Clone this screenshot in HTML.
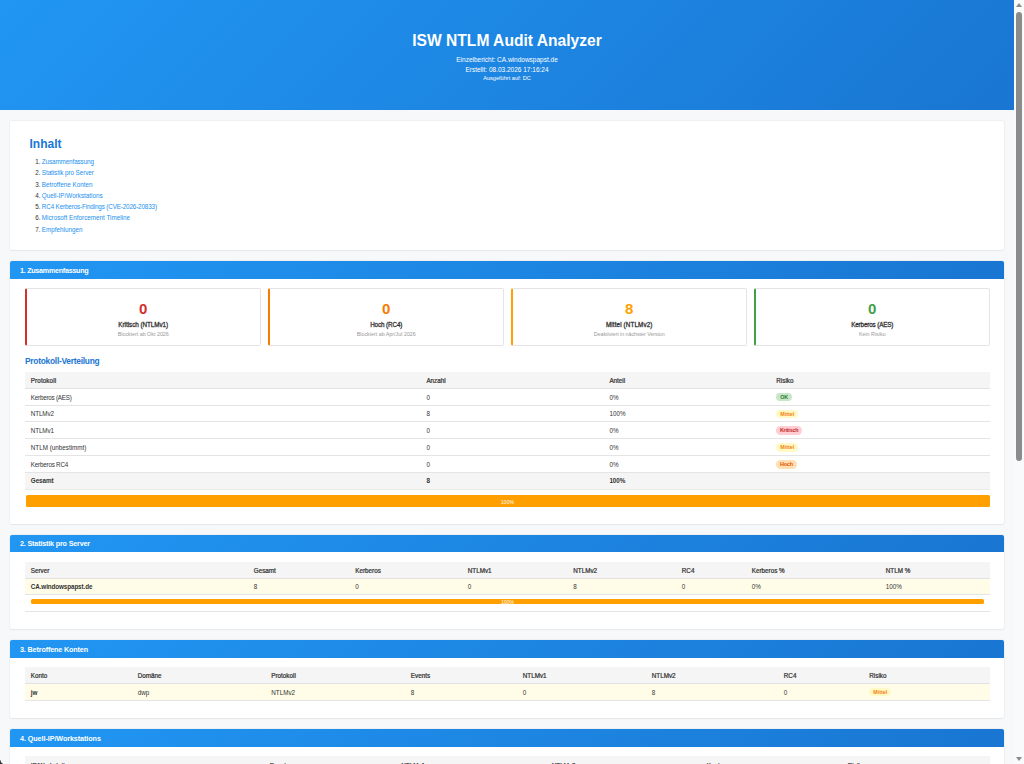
<!DOCTYPE html>
<html lang="de">
<head>
<meta charset="utf-8">
<title>ISW NTLM Audit Analyzer</title>
<style>
*{box-sizing:border-box;}
html,body{margin:0;padding:0;}
html{overflow:hidden;}
body{width:1024px;height:764px;overflow:hidden;position:relative;background:#f7f8fa;font-family:"Liberation Sans",sans-serif;color:#333;font-size:6.5px;line-height:1;}
#page{position:absolute;left:0;top:0;width:1014px;height:764px;overflow:hidden;}
.hdr{position:absolute;left:0;top:0;width:1014px;height:110px;background:linear-gradient(135deg,#2196f3 0%,#1976d2 100%);color:#fff;text-align:center;}
.hdr .t{position:absolute;left:0;width:1014px;white-space:nowrap;}
.hdr h1{margin:0;font-size:15.6px;font-weight:bold;top:33.2px;line-height:16px;}
.hdr .s1{top:56px;font-size:6.5px;line-height:8px;}
.hdr .s2{top:65.5px;font-size:6.5px;line-height:8px;}
.hdr .s3{top:74px;font-size:5.6px;line-height:8px;}
.card{position:absolute;left:10px;width:994px;background:#fff;border-radius:2px;box-shadow:0 0 0 0.5px #e6e8ea,0 0.5px 1px rgba(0,0,0,.07);}
.card .ch{position:absolute;left:0;top:0;width:994px;height:17.5px;background:linear-gradient(135deg,#2196f3 0%,#1976d2 100%);border-radius:2px 2px 0 0;color:#fff;font-weight:bold;font-size:7.2px;letter-spacing:-0.28px;line-height:17.5px;padding:0.8px 0 0 10px;white-space:nowrap;}
.abs{position:absolute;white-space:nowrap;}

#toc h2{position:absolute;left:19.5px;top:15.8px;margin:0;font-size:12px;line-height:14px;font-weight:bold;color:#1976d2;white-space:nowrap;}
#toc .li{position:absolute;left:25.2px;font-size:6.3px;line-height:8px;white-space:nowrap;color:#333;}
#toc .li a{color:#2190ee;text-decoration:none;margin-left:-0.4px;}
.sb{position:absolute;top:27.3px;height:57.7px;width:235.5px;background:#fff;border:0.5px solid #e4e4e4;border-left:2.2px solid var(--c);border-radius:2px;text-align:center;overflow:hidden;}
.sb .n{position:absolute;left:0;right:0;top:11.3px;font-size:15px;line-height:16px;font-weight:bold;color:var(--c);}
.sb .l{position:absolute;left:0;right:0;top:32px;font-size:6.3px;letter-spacing:0;line-height:8px;font-weight:normal;-webkit-text-stroke:0.28px #333;color:#333;}
.sb .d{position:absolute;left:0;right:0;top:41.7px;font-size:5.35px;line-height:7px;color:#999;}
h3.pv{position:absolute;left:15px;top:95px;margin:0;font-size:8.4px;letter-spacing:-0.26px;line-height:10px;font-weight:bold;color:#1976d2;white-space:nowrap;}
table{position:absolute;left:15px;width:964.5px;border-collapse:collapse;table-layout:fixed;font-size:6.3px;}
th,td{padding:1.9px 0 0 5.8px;text-align:left;vertical-align:middle;white-space:nowrap;overflow:visible;}
th{background:#f5f5f5;font-weight:normal;-webkit-text-stroke:0.22px #333;color:#333;height:16.6px;border-bottom:0.5px solid #e2e2e2;}
td{height:16.8px;border-bottom:0.5px solid #e4e4e4;padding-top:2.3px;}
tr.s4h th{padding-top:3.9px;}
tr.tot td{background:#f5f5f5;font-weight:bold;padding-top:0.4px;border-bottom-color:#ebebeb;letter-spacing:-0.06px;}
tr.hl td{background:#fffde7;}
tr.r2 td{height:15.8px;padding-top:1.9px;}
.bd{display:inline-block;font-size:5.4px;font-weight:bold;line-height:8.5px;height:8.5px;padding:0 3.9px;border-radius:5px;vertical-align:middle;position:relative;top:-0.7px;}
.bd.ok{background:#c8e6c9;color:#2e7d32;}
.bd.mi{background:#fff9c4;color:#f57f17;}
.bd.kr{background:#ffcdd2;color:#c62828;letter-spacing:-0.2px;padding:0 3.6px;}
.bd.ho{background:#ffe0b2;color:#e65100;letter-spacing:-0.15px;padding:0 3.7px;}
.pb{position:absolute;background:#ffa000;border-radius:1.5px;color:#fff;text-align:center;font-size:5px;}

#sbar{position:absolute;left:1014px;top:0;width:10px;height:764px;background:#fafafa;}
#sbar .th{position:absolute;left:2px;top:11.8px;width:6px;height:449.5px;border-radius:3px;background:#8b8b8b;}
#sbar .up{position:absolute;left:2px;top:3.4px;width:0;height:0;border-left:3px solid transparent;border-right:3px solid transparent;border-bottom:4.5px solid #8b8b8b;}
#sbar .dn{position:absolute;left:2px;top:757px;width:0;height:0;border-left:3px solid transparent;border-right:3px solid transparent;border-top:4.5px solid #8b8b8b;}
#corner{position:absolute;left:0;top:759.5px;width:4.5px;height:4.5px;background:radial-gradient(circle at 4.5px 0px,rgba(50,50,50,0) 3.7px,rgba(50,50,50,1) 4.4px);}
</style>
</head>
<body>
<div id="page">
  <div class="hdr">
    <h1 class="t">ISW NTLM Audit Analyzer</h1>
    <div class="t s1">Einzelbericht: CA.windowspapst.de</div>
    <div class="t s2">Erstellt: 08.03.2026 17:16:24</div>
    <div class="t s3">Ausgeführt auf: DC</div>
  </div>

  <div class="card" id="toc" style="top:121px;height:129.4px;">
    <h2>Inhalt</h2>
    <div class="li" style="top:37.0px">1. <a style="letter-spacing:-0.1px">Zusammenfassung</a></div>
    <div class="li" style="top:47.8px">2. <a style="letter-spacing:-0.06px">Statistik pro Server</a></div>
    <div class="li" style="top:60.0px">3. <a>Betroffene Konten</a></div>
    <div class="li" style="top:71.0px">4. <a>Quell-IP/Workstations</a></div>
    <div class="li" style="top:81.8px">5. <a style="letter-spacing:-0.14px">RC4 Kerberos-Findings (CVE-2026-20833)</a></div>
    <div class="li" style="top:92.8px">6. <a>Microsoft Enforcement Timeline</a></div>
    <div class="li" style="top:105.0px">7. <a>Empfehlungen</a></div>
  </div>
  <div class="card" id="s1" style="top:261px;height:262.7px;"><div class="ch">1. Zusammenfassung</div>
    <div class="sb" style="left:15px;--c:#d32f2f"><div class="n">0</div><div class="l" style="letter-spacing:-0.035px">Kritisch (NTLMv1)</div><div class="d">Blockiert ab Okt 2026</div></div>
    <div class="sb" style="left:258px;--c:#f57c00"><div class="n">0</div><div class="l" style="letter-spacing:-0.11px">Hoch (RC4)</div><div class="d">Blockiert ab Apr/Jul 2026</div></div>
    <div class="sb" style="left:501px;--c:#ffa000"><div class="n">8</div><div class="l" style="letter-spacing:0.12px">Mittel (NTLMv2)</div><div class="d" style="letter-spacing:-0.04px">Deaktiviert in nächster Version</div></div>
    <div class="sb" style="left:744px;--c:#43a047"><div class="n">0</div><div class="l" style="letter-spacing:-0.14px">Kerberos (AES)</div><div class="d">Kein Risiko</div></div>
    <h3 class="pv">Protokoll-Verteilung</h3>
    <table style="top:110.7px">
      <colgroup><col style="width:395.6px"><col style="width:183px"><col style="width:166.9px"><col></colgroup>
      <tr><th style="letter-spacing:0.1px">Protokoll</th><th>Anzahl</th><th>Anteil</th><th>Risiko</th></tr>
      <tr><td style="letter-spacing:-0.24px">Kerberos (AES)</td><td>0</td><td>0%</td><td><span class="bd ok">OK</span></td></tr>
      <tr><td style="letter-spacing:-0.12px">NTLMv2</td><td>8</td><td>100%</td><td><span class="bd mi">Mittel</span></td></tr>
      <tr><td style="letter-spacing:-0.12px">NTLMv1</td><td>0</td><td>0%</td><td><span class="bd kr">Kritisch</span></td></tr>
      <tr><td>NTLM (unbestimmt)</td><td>0</td><td>0%</td><td><span class="bd mi">Mittel</span></td></tr>
      <tr><td style="letter-spacing:-0.22px">Kerberos RC4</td><td>0</td><td>0%</td><td><span class="bd ho">Hoch</span></td></tr>
      <tr class="tot"><td>Gesamt</td><td>8</td><td>100%</td><td></td></tr>
    </table>
    <div class="pb" style="left:15.5px;top:234px;width:964px;height:11.8px;line-height:14.2px;">100%</div>
  </div>
  <div class="card" id="s2" style="top:535px;height:94.3px;"><div class="ch" style="letter-spacing:-0.17px;height:17px;line-height:17px;padding-top:0.2px">2. Statistik pro Server</div>
    <table style="top:27.2px">
      <colgroup><col style="width:223px"><col style="width:101.5px"><col style="width:112.5px"><col style="width:105.5px"><col style="width:108.5px"><col style="width:70px"><col style="width:134px"><col></colgroup>
      <tr><th>Server</th><th>Gesamt</th><th>Kerberos</th><th>NTLMv1</th><th>NTLMv2</th><th>RC4</th><th>Kerberos %</th><th>NTLM %</th></tr>
      <tr class="hl r2"><td><b style="letter-spacing:-0.1px">CA.windowspapst.de</b></td><td>8</td><td>0</td><td>0</td><td>8</td><td>0</td><td>0%</td><td>100%</td></tr>
      <tr><td colspan="8" style="height:16.7px"></td></tr>
    </table>
    <div class="pb" style="left:21.4px;top:64.2px;width:952.6px;height:5px;line-height:7.4px;">100%</div>
  </div>
  <div class="card" id="s3" style="top:640px;height:78.3px;"><div class="ch" style="letter-spacing:-0.14px">3. Betroffene Konten</div>
    <table style="top:27.4px">
      <colgroup><col style="width:107px"><col style="width:133.5px"><col style="width:139.5px"><col style="width:112px"><col style="width:129px"><col style="width:132px"><col style="width:85.5px"><col></colgroup>
      <tr><th>Konto</th><th>Domäne</th><th>Protokoll</th><th>Events</th><th>NTLMv1</th><th>NTLMv2</th><th>RC4</th><th>Risiko</th></tr>
      <tr class="hl"><td><b>jw</b></td><td>dwp</td><td>NTLMv2</td><td>8</td><td>0</td><td>8</td><td>0</td><td><span class="bd mi" style="top:-1.5px">Mittel</span></td></tr>
    </table>
  </div>
  <div class="card" id="s4" style="top:729px;height:100px;"><div class="ch" style="letter-spacing:-0.07px">4. Quell-IP/Workstations</div>
    <table style="top:27.2px">
      <colgroup><col style="width:239px"><col style="width:131.5px"><col style="width:150.5px"><col style="width:155px"><col style="width:141px"><col></colgroup>
      <tr class="s4h"><th>IP/Workstation</th><th>Events</th><th>NTLMv1</th><th>NTLMv2</th><th>Konten</th><th>Risiko</th></tr>
    </table>
  </div>
</div>
<div id="sbar"><div class="up"></div><div class="th"></div><div class="dn"></div></div>
<div id="corner"></div>
</body>
</html>
